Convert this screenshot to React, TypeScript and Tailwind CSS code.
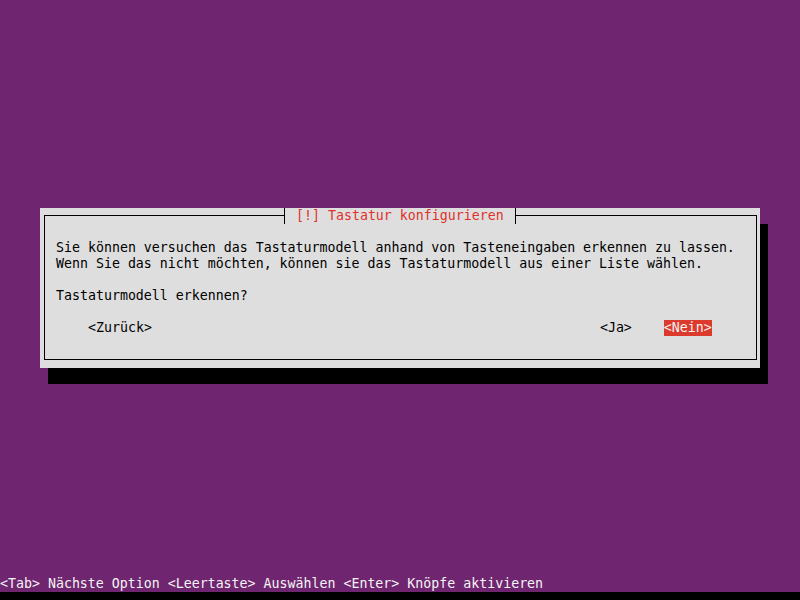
import React from "react";

const font = { fontFamily: '"DejaVu Sans Mono", "Liberation Mono", monospace' };

export default function App() {
  return (
    <div
      className="w-[800px] h-[600px] bg-[#6f2570] flex flex-col text-[13.288px] leading-[16px] overflow-hidden"
      style={font}
    >
      <div className="flex-1 pt-[208px] pl-[40px]">
        <div className="relative w-[720px] h-[160px] bg-[#dedede] shadow-[8px_16px_0_0_#000] pt-[7px] pl-[4px] pr-[3px]">
          <div className="h-[145px] border border-black pt-[24px] pl-[11px] text-black">
            <div className="whitespace-pre h-[16px]">Sie können versuchen das Tastaturmodell anhand von Tasteneingaben erkennen zu lassen.</div>
            <div className="whitespace-pre h-[16px]">Wenn Sie das nicht möchten, können sie das Tastaturmodell aus einer Liste wählen.</div>
            <div className="h-[16px]" />
            <div className="whitespace-pre h-[16px]">Tastaturmodell erkennen?</div>
            <div className="h-[16px]" />
            <div className="flex h-[16px] whitespace-pre">
              <span className="ml-[32px]">&lt;Zurück&gt;</span>
              <span className="ml-[448px]">&lt;Ja&gt;</span>
              <span className="ml-[32px] bg-[#dc3a2c] text-[#f2f2f2]">&lt;Nein&gt;</span>
            </div>
          </div>
          <div className="absolute top-0 left-[244px] h-[16px] flex bg-[#dedede]">
            <div className="w-px bg-black" />
            <span className="px-[11px] text-[#e0302a] whitespace-pre">[!] Tastatur konfigurieren</span>
            <div className="w-px bg-black" />
          </div>
        </div>
      </div>
      <div className="h-[16px] text-[#f4f4f4] whitespace-pre">&lt;Tab&gt; Nächste Option &lt;Leertaste&gt; Auswählen &lt;Enter&gt; Knöpfe aktivieren</div>
      <div className="h-[8px] bg-black" />
    </div>
  );
}
